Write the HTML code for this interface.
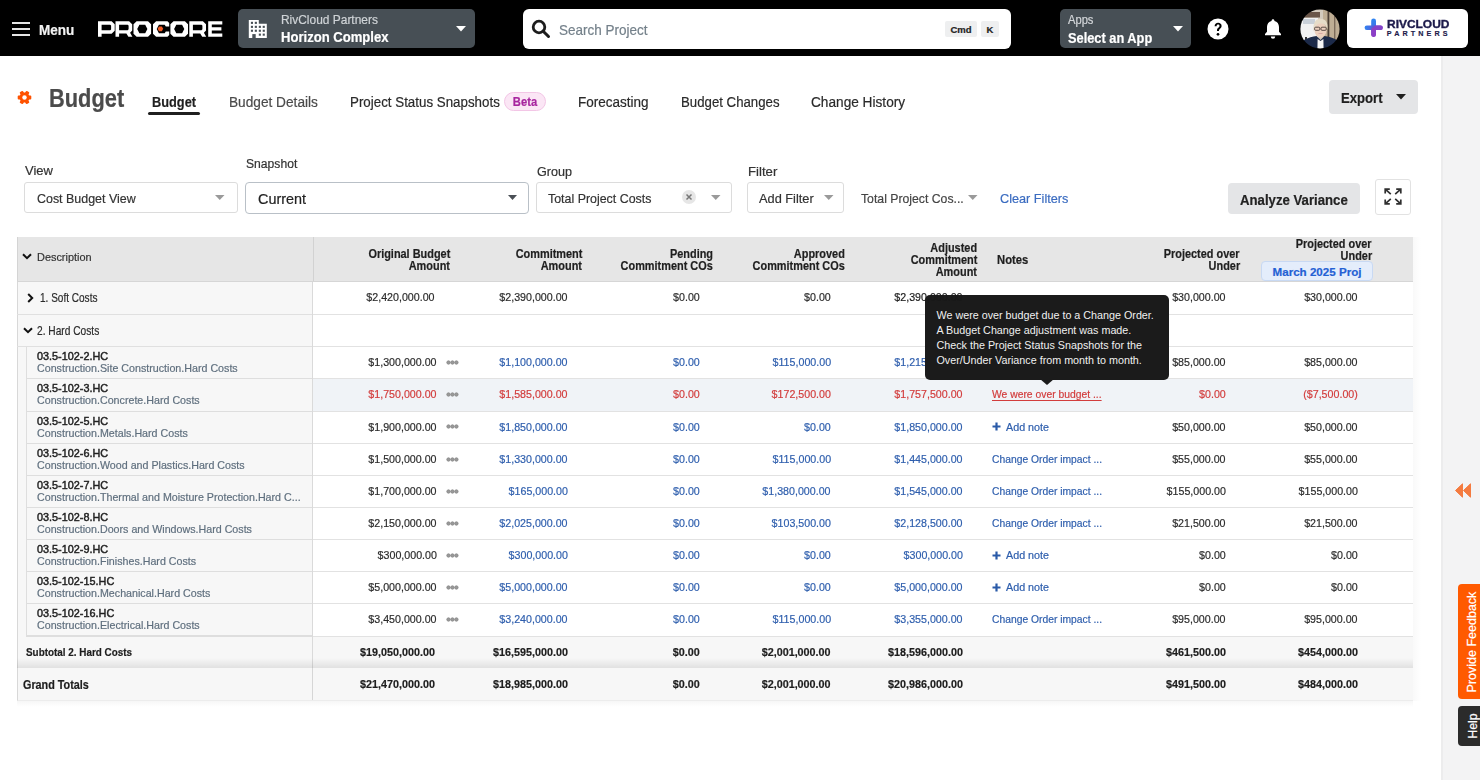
<!DOCTYPE html>
<html><head><meta charset="utf-8"><title>Budget</title>
<style>
html,body{margin:0;padding:0;}
body{width:1480px;height:780px;overflow:hidden;position:relative;background:#fff;font-family:"Liberation Sans",sans-serif;}
.t{position:absolute;line-height:1;white-space:nowrap;-webkit-text-stroke:0.2px currentColor;}
.r{position:absolute;box-sizing:border-box;}
svg{position:absolute;overflow:visible;}
</style></head><body>

<div class="r" style="left:0px;top:0px;width:1480px;height:56px;background:#000;"></div>
<div class="r" style="left:12px;top:22px;width:18px;height:2px;background:#e6e6e6;"></div>
<div class="r" style="left:12px;top:28px;width:18px;height:2px;background:#e6e6e6;"></div>
<div class="r" style="left:12px;top:34px;width:18px;height:2px;background:#e6e6e6;"></div>
<div class="t " style="left:38.5px;top:23.10px;font-size:14.30px;color:#f2f2f2;font-weight:700;transform:scaleX(0.9456);transform-origin:left top;">Menu</div>
<svg style="left:98px;top:21.1px" width="125" height="16" viewBox="0 0 125 15.5"><path transform="translate(0 0)" d="M0 0H13.6L16.7 2.9V9.6L13.6 12.5H3.6V15.5H0Z M3.6 3.4V9.1H12.2L13.1 8.2V4.3L12.2 3.4Z" fill="#fff" fill-rule="evenodd"/><path transform="translate(17.5 0)" d="M0 0H13.6L16.7 2.9V9.3L14.6 11.6L16.9 15.5H12.9L10.9 12.3H3.6V15.5H0Z M3.6 3.4V8.9H12.2L13.1 8V4.3L12.2 3.4Z" fill="#fff" fill-rule="evenodd"/><path transform="translate(35.5 0)" d="M3.1 0H14.5L17.6 3.1V12.4L14.5 15.5H3.1L0 12.4V3.1Z M5.9 3.5L3.7 7.75L5.9 12H11.7L13.9 7.75L11.7 3.5Z" fill="#fff" fill-rule="evenodd"/><path transform="translate(55 0)" d="M3.1 0H14.5L16.2 1.7V5.3H12.8L11.7 3.5H5.9L3.7 7.75L5.9 12H11.7L12.8 10.2H16.2V13.8L14.5 15.5H3.1L0 12.4V3.1Z" fill="#fff" fill-rule="evenodd"/><path transform="translate(72.4 0)" d="M3.1 0H14.5L17.6 3.1V12.4L14.5 15.5H3.1L0 12.4V3.1Z M5.9 3.5L3.7 7.75L5.9 12H11.7L13.9 7.75L11.7 3.5Z" fill="#fff" fill-rule="evenodd"/><path transform="translate(91.3 0)" d="M0 0H13.6L16.7 2.9V9.3L14.6 11.6L16.9 15.5H12.9L10.9 12.3H3.6V15.5H0Z M3.6 3.4V8.9H12.2L13.1 8V4.3L12.2 3.4Z" fill="#fff" fill-rule="evenodd"/><path transform="translate(110.2 0)" d="M0 0H14.1V3.3H3.6V6.1H13.2V9.3H3.6V12.2H14.1V15.5H0Z" fill="#fff" fill-rule="evenodd"/><path d="M59.6 7.6L61 5.2H63.8L65.2 7.6L63.8 10H61Z" fill="#f05a22"/></svg>
<div class="r" style="left:238px;top:9px;width:237px;height:39px;background:#474f55;border-radius:5px;"></div>
<svg style="left:249px;top:20px" width="18" height="18" viewBox="0.2 0.1 18 18"><path fill="#fff" d="M0 0H10V3.8H18V18H0z"/><rect x="2.1" y="1.9" width="2.1" height="2.1" fill="#474f55"/><rect x="6.0" y="1.9" width="2.1" height="2.1" fill="#474f55"/><rect x="2.1" y="5.9" width="2.1" height="2.1" fill="#474f55"/><rect x="6.0" y="5.9" width="2.1" height="2.1" fill="#474f55"/><rect x="10.0" y="5.9" width="2.1" height="2.1" fill="#474f55"/><rect x="13.9" y="5.9" width="2.1" height="2.1" fill="#474f55"/><rect x="2.1" y="9.8" width="2.1" height="2.1" fill="#474f55"/><rect x="6.0" y="9.8" width="2.1" height="2.1" fill="#474f55"/><rect x="10.0" y="9.8" width="2.1" height="2.1" fill="#474f55"/><rect x="13.9" y="9.8" width="2.1" height="2.1" fill="#474f55"/><rect x="10.0" y="13.7" width="2.1" height="2.1" fill="#474f55"/><rect x="13.9" y="13.7" width="2.1" height="2.1" fill="#474f55"/><rect x="3.5" y="14.2" width="3.4" height="4" fill="#474f55"/></svg>
<div class="t " style="left:281.2px;top:14.47px;font-size:12.20px;color:#cfd3d6;transform:scaleX(0.9799);transform-origin:left top;">RivCloud Partners</div>
<div class="t " style="left:281.2px;top:30.83px;font-size:13.90px;color:#fff;font-weight:700;transform:scaleX(0.9415);transform-origin:left top;">Horizon Complex</div>
<svg style="left:456px;top:26px" width="10" height="6"><path d="M0 0h10L5 5.5z" fill="#fff"/></svg>
<div class="r" style="left:523px;top:9px;width:488px;height:39.7px;background:#fff;border-radius:6px;"></div>
<svg style="left:531px;top:19px" width="20" height="20" viewBox="0 0 20 20"><circle cx="8" cy="8" r="5.8" fill="none" stroke="#1d1d1d" stroke-width="2.8"/><path d="M12.2 12.2L17.5 17.5" stroke="#1d1d1d" stroke-width="3" stroke-linecap="round"/></svg>
<div class="t " style="left:558.6px;top:22.98px;font-size:14.20px;color:#74808a;transform:scaleX(0.9514);transform-origin:left top;">Search Project</div>
<div class="r" style="left:945px;top:21px;width:32px;height:16px;background:#eeeff0;border-radius:2px;"></div>
<div class="t " style="left:461.0px;width:1000px;text-align:center;top:25.06px;font-size:9.50px;color:#222;font-weight:700;">Cmd</div>
<div class="r" style="left:981px;top:21px;width:18px;height:16px;background:#eeeff0;border-radius:2px;"></div>
<div class="t " style="left:490.0px;width:1000px;text-align:center;top:25.06px;font-size:9.50px;color:#222;font-weight:700;">K</div>
<div class="r" style="left:1060px;top:9px;width:131px;height:39px;background:#474f55;border-radius:5px;"></div>
<div class="t " style="left:1068.0px;top:14.30px;font-size:12.40px;color:#d4d7da;transform:scaleX(0.9000);transform-origin:left top;">Apps</div>
<div class="t " style="left:1068.0px;top:30.58px;font-size:14.20px;color:#fff;font-weight:700;transform:scaleX(0.9029);transform-origin:left top;">Select an App</div>
<svg style="left:1173px;top:26px" width="10" height="6"><path d="M0 0h10L5 5.5z" fill="#fff"/></svg>
<svg style="left:1207px;top:18px" width="22" height="22" viewBox="0 0 22 22"><circle cx="11" cy="11" r="10.5" fill="#fff"/><path d="M7.6 8.3c0-2.1 1.5-3.5 3.5-3.5s3.5 1.3 3.5 3.1c0 2.4-2.6 2.6-2.6 4.6v.5h-2v-.7c0-2.6 2.5-2.7 2.5-4.3 0-.9-.6-1.4-1.4-1.4-.9 0-1.5.6-1.5 1.7z" fill="#000"/><circle cx="11" cy="16.3" r="1.35" fill="#000"/></svg>
<svg style="left:1263px;top:18px" width="20" height="22" viewBox="0 0 20 22"><path d="M10 1.2c.8 0 1.4.6 1.4 1.3v.6c2.9.6 4.6 3 4.6 6v4.6l2 2.4v1.1H2v-1.1l2-2.4V9.1c0-3 1.7-5.4 4.6-6v-.6c0-.7.6-1.3 1.4-1.3z" fill="#fff"/><path d="M7.8 18.5h4.4a2.2 2.2 0 0 1-4.4 0z" fill="#fff"/></svg>
<svg style="left:1300px;top:9px" width="40" height="40" viewBox="0 0 40 40"><defs><clipPath id="avc"><circle cx="20" cy="20" r="19.6"/></clipPath><filter id="avb" x="-10%" y="-10%" width="120%" height="120%"><feGaussianBlur stdDeviation="0.6"/></filter></defs><g clip-path="url(#avc)"><g filter="url(#avb)"><rect x="-2" y="-2" width="44" height="44" fill="#d3cabd"/><rect x="-2" y="9" width="20" height="33" fill="#f1f1f1"/><rect x="4" y="3" width="16" height="5.5" fill="#6a574a"/><rect x="3" y="10" width="12" height="5" fill="#c9d0d8"/><rect x="23" y="-2" width="19" height="44" fill="#bfae94"/><rect x="27.5" y="2" width="1.8" height="34" fill="#4e4036"/><rect x="34" y="5" width="1.4" height="32" fill="#7d6c5a"/><rect x="5" y="28" width="2" height="6" fill="#333"/><ellipse cx="20.5" cy="21" rx="6" ry="7.6" fill="#ecd0be"/><path d="M13.6 23C12.6 14 15.5 9.8 20.5 9.8S28.3 13.5 27.4 20.5C26.2 16.5 24.5 14.6 20.5 14.6S15 16.8 13.6 23z" fill="#e6dcc8"/><rect x="14.6" y="18.2" width="5.2" height="3.1" rx="1" fill="none" stroke="#4a3c38" stroke-width="0.9"/><rect x="21" y="18.2" width="5.2" height="3.1" rx="1" fill="none" stroke="#4a3c38" stroke-width="0.9"/><path d="M18.5 24.5h4" stroke="#d4a0a0" stroke-width="0.8"/><path d="M1 42L4 31C8 28.5 13 27.5 16.5 27L20.5 31L24.5 27C28 27.5 33 28.5 37 31L40 42z" fill="#1f2a48"/><path d="M17.6 30L20.5 32L23.4 30L23.6 42H17.4z" fill="#f6f6f6"/></g></g></svg>
<div class="r" style="left:1347px;top:9px;width:121px;height:39px;background:#fff;border-radius:6px;"></div>
<svg style="left:1364px;top:18px" width="20" height="20" viewBox="0 0 20 20"><defs><linearGradient id="gv" x1="0" y1="0" x2="0" y2="1"><stop offset="0" stop-color="#2f86f2"/><stop offset="0.45" stop-color="#3d74e8"/><stop offset="1" stop-color="#9a3cc4"/></linearGradient><linearGradient id="gh" x1="0" y1="0" x2="1" y2="0"><stop offset="0" stop-color="#2f86f2"/><stop offset="0.5" stop-color="#5a5ad8"/><stop offset="1" stop-color="#8a40c8"/></linearGradient></defs><rect x="7.2" y="0.4" width="4.8" height="18.6" rx="2.4" fill="url(#gv)"/><rect x="0.6" y="7.5" width="18.2" height="4.4" rx="2.2" fill="url(#gh)"/><rect x="9.6" y="7.5" width="9.2" height="4.4" rx="2.2" fill="#8443c9"/><rect x="7.2" y="9.6" width="4.8" height="9.4" rx="2.4" fill="#8c3fc6"/></svg>
<div class="t " style="left:1386.6px;top:18.87px;font-size:11.50px;color:#1d1b4b;font-weight:700;transform:scaleX(1.0390);transform-origin:left top;-webkit-text-stroke:0.35px #1d1b4b;">RIVCLOUD</div>
<div class="t " style="left:1386.8px;top:30.31px;font-size:7.20px;color:#1d1b4b;font-weight:700;letter-spacing:3.1px;-webkit-text-stroke:0.15px #1d1b4b;">PARTNERS</div>
<div class="r" style="left:1441px;top:56px;width:39px;height:724px;background:#f3f3f4;border-left:2px solid #ececed;"></div>
<div class="r" style="left:1413px;top:237px;width:8px;height:464px;background:linear-gradient(to right,#f5f5f5,#fff);opacity:.6;"></div>
<svg style="left:1455px;top:483px" width="16" height="15" viewBox="0 0 16 15"><path d="M0.5 7.5L7.5 0.8V14.2z M8.5 7.5L15.5 0.8V14.2z" fill="#f47b40" stroke="#f47b40" stroke-width="1" stroke-linejoin="round"/></svg>
<div class="r" style="left:1458px;top:584px;width:22px;height:115px;background:#ff5a00;border-radius:4px 0 0 4px;"></div>
<div class="t" style="left:1471.5px;top:641.8px;font-size:12.5px;color:#fff;transform:translate(-50%,-50%) rotate(-90deg);line-height:1;">Provide Feedback</div>
<div class="r" style="left:1458px;top:706px;width:22px;height:40px;background:#2b2b2b;border-radius:4px 0 0 4px;"></div>
<div class="t" style="left:1473px;top:726px;font-size:12.3px;color:#fff;transform:translate(-50%,-50%) rotate(-90deg);line-height:1;">Help</div>
<svg style="left:17px;top:89.5px" width="15" height="15" viewBox="-7.5 -7.5 15 15"><circle r="5" fill="#ff5200"/><rect x="2" y="-1.9" width="4.8" height="3.8" rx="0.9" fill="#ff5200" transform="rotate(0)"/><rect x="2" y="-1.9" width="4.8" height="3.8" rx="0.9" fill="#ff5200" transform="rotate(60)"/><rect x="2" y="-1.9" width="4.8" height="3.8" rx="0.9" fill="#ff5200" transform="rotate(120)"/><rect x="2" y="-1.9" width="4.8" height="3.8" rx="0.9" fill="#ff5200" transform="rotate(180)"/><rect x="2" y="-1.9" width="4.8" height="3.8" rx="0.9" fill="#ff5200" transform="rotate(240)"/><rect x="2" y="-1.9" width="4.8" height="3.8" rx="0.9" fill="#ff5200" transform="rotate(300)"/><circle r="2.2" fill="#fff"/></svg>
<div class="t " style="left:48.6px;top:86.02px;font-size:24.90px;color:#4b4b4b;font-weight:700;transform:scaleX(0.8770);transform-origin:left top;">Budget</div>
<div class="t " style="left:151.9px;top:94.48px;font-size:15.50px;color:#1f1f1f;font-weight:700;transform:scaleX(0.8243);transform-origin:left top;">Budget</div>
<div class="r" style="left:148px;top:112px;width:52px;height:3px;background:#1f1f1f;border-radius:2px;"></div>
<div class="t " style="left:228.5px;top:94.48px;font-size:15.50px;color:#4a4a4a;transform:scaleX(0.8819);transform-origin:left top;">Budget Details</div>
<div class="t " style="left:350.0px;top:94.48px;font-size:15.50px;color:#2a2a2a;transform:scaleX(0.8608);transform-origin:left top;">Project Status Snapshots</div>
<div class="r" style="left:504px;top:92px;width:42px;height:19px;background:#fbe6f5;border:1px solid #f3c6e6;border-radius:10px;"></div>
<div class="t " style="left:25.0px;width:1000px;text-align:center;top:96.07px;font-size:12.20px;color:#a8269f;font-weight:700;transform:scaleX(0.9200);transform-origin:center top;">Beta</div>
<div class="t " style="left:578.2px;top:94.48px;font-size:15.50px;color:#2a2a2a;transform:scaleX(0.8719);transform-origin:left top;">Forecasting</div>
<div class="t " style="left:680.9px;top:94.48px;font-size:15.50px;color:#2a2a2a;transform:scaleX(0.8530);transform-origin:left top;">Budget Changes</div>
<div class="t " style="left:811.3px;top:94.48px;font-size:15.50px;color:#2a2a2a;transform:scaleX(0.8809);transform-origin:left top;">Change History</div>
<div class="r" style="left:1329px;top:80px;width:89px;height:34px;background:#e4e5e7;border-radius:4px;"></div>
<div class="t " style="left:1341.0px;top:91.33px;font-size:14.50px;color:#1f1f1f;font-weight:700;transform:scaleX(0.9059);transform-origin:left top;">Export</div>
<svg style="left:1396px;top:94px" width="10" height="6"><path d="M0 0h10L5 5.5z" fill="#1f1f1f"/></svg>
<div class="t " style="left:24.6px;top:165.36px;font-size:12.45px;color:#333;transform:scaleX(1.0463);transform-origin:left top;">View</div>
<div class="r" style="left:24px;top:182px;width:214px;height:31px;border:1px solid #dcdcdc;border-radius:3px;background:#fff;"></div>
<div class="t " style="left:37.4px;top:192.27px;font-size:13.50px;color:#333;transform:scaleX(0.9210);transform-origin:left top;">Cost Budget View</div>
<svg style="left:215px;top:195px" width="10" height="6"><path d="M0 0h9.5L4.75 5z" fill="#9a9a9a"/></svg>
<div class="t " style="left:245.5px;top:158.26px;font-size:12.45px;color:#333;transform:scaleX(0.9752);transform-origin:left top;">Snapshot</div>
<div class="r" style="left:245px;top:182px;width:284px;height:32px;border:1px solid #b9c0c7;border-radius:4px;background:#fff;"></div>
<div class="t " style="left:258.3px;top:192.20px;font-size:14.30px;color:#222;transform:scaleX(1.0067);transform-origin:left top;">Current</div>
<svg style="left:508px;top:195px" width="10" height="6"><path d="M0 0h9L4.5 5z" fill="#4a4f55"/></svg>
<div class="t " style="left:536.6px;top:165.76px;font-size:12.45px;color:#333;transform:scaleX(1.0116);transform-origin:left top;">Group</div>
<div class="r" style="left:536px;top:182px;width:196px;height:31px;border:1px solid #dcdcdc;border-radius:3px;background:#fff;"></div>
<div class="t " style="left:548.4px;top:192.27px;font-size:13.50px;color:#333;transform:scaleX(0.9188);transform-origin:left top;">Total Project Costs</div>
<div class="r" style="left:682px;top:190px;width:14px;height:14px;border-radius:50%;background:#e6e6e6;"></div>
<svg style="left:686px;top:194px" width="6" height="6"><path d="M0.5 0.5L5.5 5.5M5.5 0.5L0.5 5.5" stroke="#777" stroke-width="1.5"/></svg>
<svg style="left:711px;top:195px" width="10" height="6"><path d="M0 0h9.5L4.75 5z" fill="#9a9a9a"/></svg>
<div class="t " style="left:747.5px;top:165.76px;font-size:12.45px;color:#333;transform:scaleX(1.0591);transform-origin:left top;">Filter</div>
<div class="r" style="left:747px;top:182px;width:97px;height:31px;border:1px solid #dcdcdc;border-radius:3px;background:#fff;"></div>
<div class="t " style="left:758.8px;top:192.27px;font-size:13.50px;color:#333;transform:scaleX(0.9469);transform-origin:left top;">Add Filter</div>
<svg style="left:824px;top:195px" width="10" height="6"><path d="M0 0h9.5L4.75 5z" fill="#9a9a9a"/></svg>
<div class="t " style="left:861.3px;top:192.47px;font-size:13.50px;color:#444;transform:scaleX(0.9065);transform-origin:left top;">Total Project Cos...</div>
<svg style="left:968px;top:195px" width="10" height="6"><path d="M0 0h9.5L4.75 5z" fill="#9a9a9a"/></svg>
<div class="t " style="left:999.6px;top:192.07px;font-size:13.50px;color:#3b6cc0;transform:scaleX(0.9401);transform-origin:left top;">Clear Filters</div>
<div class="r" style="left:1228px;top:183px;width:132px;height:31px;background:#e4e5e7;border-radius:4px;"></div>
<div class="t " style="left:1239.7px;top:192.61px;font-size:14.40px;color:#232323;font-weight:700;transform:scaleX(0.9162);transform-origin:left top;">Analyze Variance</div>
<div class="r" style="left:1375px;top:179px;width:36px;height:36px;border:1px solid #e2e2e2;border-radius:3px;background:#fff;"></div>
<svg style="left:1383.5px;top:187.5px" width="18" height="17" viewBox="0 0 18 17" fill="none" stroke="#2f2f2f" stroke-width="1.7" stroke-linejoin="miter"><path d="M1.2 1.2L6.8 6.2M5.8 1.2H1.2V5.4"/><path d="M16.8 1.2L11.2 6.2M12.2 1.2H16.8V5.4"/><path d="M1.2 15.8L6.8 10.8M5.8 15.8H1.2V11.6"/><path d="M16.8 15.8L11.2 10.8M12.2 15.8H16.8V11.6"/></svg>
<div class="r" style="left:17px;top:237px;width:1396px;height:44px;background:#e6e6e6;border-left:1px solid #d4d4d4;"></div>
<div class="r" style="left:313px;top:237px;width:1px;height:44px;background:#d2d2d2;"></div>
<div class="r" style="left:17px;top:281px;width:1396px;height:1px;background:#d6d6d6;"></div>
<svg style="left:22px;top:253px" width="10" height="7"><path d="M1 1.2L5 5.2L9 1.2" fill="none" stroke="#111" stroke-width="2"/></svg>
<div class="t " style="left:37.4px;top:251.95px;font-size:11.40px;color:#333;transform:scaleX(0.9576);transform-origin:left top;">Description</div>
<div class="t " style="right:1030.0px;top:247.99px;font-size:12.18px;color:#1f1f1f;font-weight:700;transform:scaleX(0.8970);transform-origin:right top;">Original Budget</div>
<div class="t " style="right:1030.0px;top:259.99px;font-size:12.18px;color:#1f1f1f;font-weight:700;transform:scaleX(0.8970);transform-origin:right top;">Amount</div>
<div class="t " style="right:898.0px;top:247.99px;font-size:12.18px;color:#1f1f1f;font-weight:700;transform:scaleX(0.8970);transform-origin:right top;">Commitment</div>
<div class="t " style="right:898.0px;top:259.99px;font-size:12.18px;color:#1f1f1f;font-weight:700;transform:scaleX(0.8970);transform-origin:right top;">Amount</div>
<div class="t " style="right:767.0px;top:247.99px;font-size:12.18px;color:#1f1f1f;font-weight:700;transform:scaleX(0.8970);transform-origin:right top;">Pending</div>
<div class="t " style="right:767.0px;top:259.99px;font-size:12.18px;color:#1f1f1f;font-weight:700;transform:scaleX(0.8970);transform-origin:right top;">Commitment COs</div>
<div class="t " style="right:635.0px;top:247.99px;font-size:12.18px;color:#1f1f1f;font-weight:700;transform:scaleX(0.8970);transform-origin:right top;">Approved</div>
<div class="t " style="right:635.0px;top:259.99px;font-size:12.18px;color:#1f1f1f;font-weight:700;transform:scaleX(0.8970);transform-origin:right top;">Commitment COs</div>
<div class="t " style="right:503.0px;top:241.79px;font-size:12.18px;color:#1f1f1f;font-weight:700;transform:scaleX(0.8970);transform-origin:right top;">Adjusted</div>
<div class="t " style="right:503.0px;top:253.79px;font-size:12.18px;color:#1f1f1f;font-weight:700;transform:scaleX(0.8970);transform-origin:right top;">Commitment</div>
<div class="t " style="right:503.0px;top:265.79px;font-size:12.18px;color:#1f1f1f;font-weight:700;transform:scaleX(0.8970);transform-origin:right top;">Amount</div>
<div class="t " style="left:997.3px;top:254.49px;font-size:12.18px;color:#1f1f1f;font-weight:700;transform:scaleX(0.9250);transform-origin:left top;">Notes</div>
<div class="t " style="right:240.0px;top:247.89px;font-size:12.18px;color:#1f1f1f;font-weight:700;transform:scaleX(0.8970);transform-origin:right top;">Projected over</div>
<div class="t " style="right:240.0px;top:259.89px;font-size:12.18px;color:#1f1f1f;font-weight:700;transform:scaleX(0.8970);transform-origin:right top;">Under</div>
<div class="t " style="right:108.0px;top:237.99px;font-size:12.18px;color:#1f1f1f;font-weight:700;transform:scaleX(0.8970);transform-origin:right top;">Projected over</div>
<div class="t " style="right:108.0px;top:249.99px;font-size:12.18px;color:#1f1f1f;font-weight:700;transform:scaleX(0.8970);transform-origin:right top;">Under</div>
<div class="r" style="left:1261px;top:261px;width:112px;height:20px;background:#e4edfb;border:1px solid #c8d9f3;border-radius:4px;"></div>
<div class="t " style="left:817.0px;width:1000px;text-align:center;top:266.28px;font-size:11.60px;color:#2461d4;font-weight:700;">March 2025 Proj</div>
<div class="r" style="left:17px;top:282px;width:295px;height:419px;background:#f7f7f7;border-left:1px solid #d8d8d8;"></div>
<div class="r" style="left:312px;top:282px;width:1px;height:419px;background:#dadada;"></div>
<div class="r" style="left:313px;top:282px;width:1100px;height:386px;background:#fff;"></div>
<div class="r" style="left:26px;top:346px;width:286px;height:290px;border:1px solid #dedede;border-right:none;"></div>
<div class="r" style="left:17px;top:314px;width:295px;height:1px;background:#e0e0e0;"></div>
<div class="r" style="left:313px;top:314px;width:1100px;height:1px;background:#e2e2e2;"></div>
<svg style="left:27px;top:292.5px" width="7" height="10"><path d="M1.2 1L5.2 5L1.2 9" fill="none" stroke="#111" stroke-width="2"/></svg>
<div class="t " style="left:39.7px;top:292.07px;font-size:12.20px;color:#2b2b2b;transform:scaleX(0.8233);transform-origin:left top;">1. Soft Costs</div>
<div class="t " style="right:1045.0px;top:292.37px;font-size:11.50px;color:#2b2b2b;transform:scaleX(0.9280);transform-origin:right top;">$2,420,000.00</div>
<div class="t " style="right:912.0px;top:292.37px;font-size:11.50px;color:#2b2b2b;transform:scaleX(0.9280);transform-origin:right top;">$2,390,000.00</div>
<div class="t " style="right:780.5px;top:292.37px;font-size:11.50px;color:#2b2b2b;transform:scaleX(0.9280);transform-origin:right top;">$0.00</div>
<div class="t " style="right:649.0px;top:292.37px;font-size:11.50px;color:#2b2b2b;transform:scaleX(0.9280);transform-origin:right top;">$0.00</div>
<div class="t " style="right:254.0px;top:292.37px;font-size:11.50px;color:#2b2b2b;transform:scaleX(0.9280);transform-origin:right top;">$30,000.00</div>
<div class="t " style="right:122.5px;top:292.37px;font-size:11.50px;color:#2b2b2b;transform:scaleX(0.9280);transform-origin:right top;">$30,000.00</div>
<div class="r" style="left:17px;top:346px;width:295px;height:1px;background:#e0e0e0;"></div>
<div class="r" style="left:313px;top:346px;width:1100px;height:1px;background:#e2e2e2;"></div>
<svg style="left:23px;top:327.0px" width="10" height="7"><path d="M1 1.2L5 5.2L9 1.2" fill="none" stroke="#111" stroke-width="2"/></svg>
<div class="t " style="left:37.4px;top:324.57px;font-size:12.20px;color:#2b2b2b;transform:scaleX(0.8354);transform-origin:left top;">2. Hard Costs</div>
<div class="r" style="left:26px;top:378px;width:286px;height:1px;background:#dedede;"></div>
<div class="r" style="left:313px;top:378px;width:1100px;height:1px;background:#e2e2e2;"></div>
<div class="t " style="left:36.9px;top:350.77px;font-size:11.20px;color:#222;transform:scaleX(0.9700);transform-origin:left top;-webkit-text-stroke:0.45px #222;">03.5-102-2.HC</div>
<div class="t " style="left:36.9px;top:362.97px;font-size:11.20px;color:#5f6f7e;transform:scaleX(0.9550);transform-origin:left top;">Construction.Site Construction.Hard Costs</div>
<div class="t " style="right:1043.0px;top:356.87px;font-size:11.50px;color:#2b2b2b;transform:scaleX(0.9280);transform-origin:right top;">$1,300,000.00</div>
<svg style="left:446px;top:359.50px" width="13" height="5" viewBox="0 0 13 5" fill="#9a9a9a" stroke="#858585" stroke-width="0.8"><circle cx="2.5" cy="2.5" r="1.7"/><circle cx="6.45" cy="2.5" r="1.7"/><circle cx="10.4" cy="2.5" r="1.7"/></svg>
<div class="t " style="right:912.0px;top:356.87px;font-size:11.50px;color:#2e5ead;transform:scaleX(0.9280);transform-origin:right top;">$1,100,000.00</div>
<div class="t " style="right:780.5px;top:356.87px;font-size:11.50px;color:#2e5ead;transform:scaleX(0.9280);transform-origin:right top;">$0.00</div>
<div class="t " style="right:649.0px;top:356.87px;font-size:11.50px;color:#2e5ead;transform:scaleX(0.9280);transform-origin:right top;">$115,000.00</div>
<div class="t " style="right:517.0px;top:356.87px;font-size:11.50px;color:#2e5ead;transform:scaleX(0.9280);transform-origin:right top;">$1,215,000.00</div>
<div class="t " style="left:991.6px;top:356.87px;font-size:11.50px;color:#2e5ead;transform:scaleX(0.8964);transform-origin:left top;">Change Order impact ...</div>
<div class="t " style="right:254.0px;top:356.87px;font-size:11.50px;color:#2b2b2b;transform:scaleX(0.9280);transform-origin:right top;">$85,000.00</div>
<div class="t " style="right:122.5px;top:356.87px;font-size:11.50px;color:#2b2b2b;transform:scaleX(0.9280);transform-origin:right top;">$85,000.00</div>
<div class="r" style="left:313px;top:379px;width:1100px;height:31.5px;background:#f0f3f7;"></div>
<div class="r" style="left:26px;top:410.5px;width:286px;height:1px;background:#dedede;"></div>
<div class="r" style="left:313px;top:410.5px;width:1100px;height:1px;background:#e2e2e2;"></div>
<div class="t " style="left:36.9px;top:383.02px;font-size:11.20px;color:#222;transform:scaleX(0.9700);transform-origin:left top;-webkit-text-stroke:0.45px #222;">03.5-102-3.HC</div>
<div class="t " style="left:36.9px;top:395.22px;font-size:11.20px;color:#5f6f7e;transform:scaleX(0.9550);transform-origin:left top;">Construction.Concrete.Hard Costs</div>
<div class="t " style="right:1043.0px;top:389.12px;font-size:11.50px;color:#d23c3c;transform:scaleX(0.9280);transform-origin:right top;">$1,750,000.00</div>
<svg style="left:446px;top:391.75px" width="13" height="5" viewBox="0 0 13 5" fill="#9a9a9a" stroke="#858585" stroke-width="0.8"><circle cx="2.5" cy="2.5" r="1.7"/><circle cx="6.45" cy="2.5" r="1.7"/><circle cx="10.4" cy="2.5" r="1.7"/></svg>
<div class="t " style="right:912.0px;top:389.12px;font-size:11.50px;color:#d23c3c;transform:scaleX(0.9280);transform-origin:right top;">$1,585,000.00</div>
<div class="t " style="right:780.5px;top:389.12px;font-size:11.50px;color:#d23c3c;transform:scaleX(0.9280);transform-origin:right top;">$0.00</div>
<div class="t " style="right:649.0px;top:389.12px;font-size:11.50px;color:#d23c3c;transform:scaleX(0.9280);transform-origin:right top;">$172,500.00</div>
<div class="t " style="right:517.0px;top:389.12px;font-size:11.50px;color:#d23c3c;transform:scaleX(0.9280);transform-origin:right top;">$1,757,500.00</div>
<div class="t " style="left:991.6px;top:389.12px;font-size:11.50px;color:#d23c3c;transform:scaleX(0.8993);transform-origin:left top;text-decoration:underline;text-underline-offset:1.5px;">We were over budget ...</div>
<div class="t " style="right:254.0px;top:389.12px;font-size:11.50px;color:#d23c3c;transform:scaleX(0.9280);transform-origin:right top;">$0.00</div>
<div class="t " style="right:122.5px;top:389.12px;font-size:11.50px;color:#d23c3c;transform:scaleX(0.9280);transform-origin:right top;">($7,500.00)</div>
<div class="r" style="left:26px;top:443px;width:286px;height:1px;background:#dedede;"></div>
<div class="r" style="left:313px;top:443px;width:1100px;height:1px;background:#e2e2e2;"></div>
<div class="t " style="left:36.9px;top:415.52px;font-size:11.20px;color:#222;transform:scaleX(0.9700);transform-origin:left top;-webkit-text-stroke:0.45px #222;">03.5-102-5.HC</div>
<div class="t " style="left:36.9px;top:427.72px;font-size:11.20px;color:#5f6f7e;transform:scaleX(0.9550);transform-origin:left top;">Construction.Metals.Hard Costs</div>
<div class="t " style="right:1043.0px;top:421.62px;font-size:11.50px;color:#2b2b2b;transform:scaleX(0.9280);transform-origin:right top;">$1,900,000.00</div>
<svg style="left:446px;top:424.25px" width="13" height="5" viewBox="0 0 13 5" fill="#9a9a9a" stroke="#858585" stroke-width="0.8"><circle cx="2.5" cy="2.5" r="1.7"/><circle cx="6.45" cy="2.5" r="1.7"/><circle cx="10.4" cy="2.5" r="1.7"/></svg>
<div class="t " style="right:912.0px;top:421.62px;font-size:11.50px;color:#2e5ead;transform:scaleX(0.9280);transform-origin:right top;">$1,850,000.00</div>
<div class="t " style="right:780.5px;top:421.62px;font-size:11.50px;color:#2e5ead;transform:scaleX(0.9280);transform-origin:right top;">$0.00</div>
<div class="t " style="right:649.0px;top:421.62px;font-size:11.50px;color:#2e5ead;transform:scaleX(0.9280);transform-origin:right top;">$0.00</div>
<div class="t " style="right:517.0px;top:421.62px;font-size:11.50px;color:#2e5ead;transform:scaleX(0.9280);transform-origin:right top;">$1,850,000.00</div>
<svg style="left:992px;top:422.2px" width="9" height="9"><path d="M4.5 0.5v8M0.5 4.5h8" stroke="#2a5aa8" stroke-width="2.2"/></svg>
<div class="t " style="left:1006.0px;top:421.62px;font-size:11.50px;color:#2e5ead;transform:scaleX(0.9341);transform-origin:left top;">Add note</div>
<div class="t " style="right:254.0px;top:421.62px;font-size:11.50px;color:#2b2b2b;transform:scaleX(0.9280);transform-origin:right top;">$50,000.00</div>
<div class="t " style="right:122.5px;top:421.62px;font-size:11.50px;color:#2b2b2b;transform:scaleX(0.9280);transform-origin:right top;">$50,000.00</div>
<div class="r" style="left:26px;top:475px;width:286px;height:1px;background:#dedede;"></div>
<div class="r" style="left:313px;top:475px;width:1100px;height:1px;background:#e2e2e2;"></div>
<div class="t " style="left:36.9px;top:447.77px;font-size:11.20px;color:#222;transform:scaleX(0.9700);transform-origin:left top;-webkit-text-stroke:0.45px #222;">03.5-102-6.HC</div>
<div class="t " style="left:36.9px;top:459.97px;font-size:11.20px;color:#5f6f7e;transform:scaleX(0.9550);transform-origin:left top;">Construction.Wood and Plastics.Hard Costs</div>
<div class="t " style="right:1043.0px;top:453.87px;font-size:11.50px;color:#2b2b2b;transform:scaleX(0.9280);transform-origin:right top;">$1,500,000.00</div>
<svg style="left:446px;top:456.50px" width="13" height="5" viewBox="0 0 13 5" fill="#9a9a9a" stroke="#858585" stroke-width="0.8"><circle cx="2.5" cy="2.5" r="1.7"/><circle cx="6.45" cy="2.5" r="1.7"/><circle cx="10.4" cy="2.5" r="1.7"/></svg>
<div class="t " style="right:912.0px;top:453.87px;font-size:11.50px;color:#2e5ead;transform:scaleX(0.9280);transform-origin:right top;">$1,330,000.00</div>
<div class="t " style="right:780.5px;top:453.87px;font-size:11.50px;color:#2e5ead;transform:scaleX(0.9280);transform-origin:right top;">$0.00</div>
<div class="t " style="right:649.0px;top:453.87px;font-size:11.50px;color:#2e5ead;transform:scaleX(0.9280);transform-origin:right top;">$115,000.00</div>
<div class="t " style="right:517.0px;top:453.87px;font-size:11.50px;color:#2e5ead;transform:scaleX(0.9280);transform-origin:right top;">$1,445,000.00</div>
<div class="t " style="left:991.6px;top:453.87px;font-size:11.50px;color:#2e5ead;transform:scaleX(0.8964);transform-origin:left top;">Change Order impact ...</div>
<div class="t " style="right:254.0px;top:453.87px;font-size:11.50px;color:#2b2b2b;transform:scaleX(0.9280);transform-origin:right top;">$55,000.00</div>
<div class="t " style="right:122.5px;top:453.87px;font-size:11.50px;color:#2b2b2b;transform:scaleX(0.9280);transform-origin:right top;">$55,000.00</div>
<div class="r" style="left:26px;top:507px;width:286px;height:1px;background:#dedede;"></div>
<div class="r" style="left:313px;top:507px;width:1100px;height:1px;background:#e2e2e2;"></div>
<div class="t " style="left:36.9px;top:479.77px;font-size:11.20px;color:#222;transform:scaleX(0.9700);transform-origin:left top;-webkit-text-stroke:0.45px #222;">03.5-102-7.HC</div>
<div class="t " style="left:36.9px;top:491.97px;font-size:11.20px;color:#5f6f7e;transform:scaleX(0.9550);transform-origin:left top;">Construction.Thermal and Moisture Protection.Hard C...</div>
<div class="t " style="right:1043.0px;top:485.87px;font-size:11.50px;color:#2b2b2b;transform:scaleX(0.9280);transform-origin:right top;">$1,700,000.00</div>
<svg style="left:446px;top:488.50px" width="13" height="5" viewBox="0 0 13 5" fill="#9a9a9a" stroke="#858585" stroke-width="0.8"><circle cx="2.5" cy="2.5" r="1.7"/><circle cx="6.45" cy="2.5" r="1.7"/><circle cx="10.4" cy="2.5" r="1.7"/></svg>
<div class="t " style="right:912.0px;top:485.87px;font-size:11.50px;color:#2e5ead;transform:scaleX(0.9280);transform-origin:right top;">$165,000.00</div>
<div class="t " style="right:780.5px;top:485.87px;font-size:11.50px;color:#2e5ead;transform:scaleX(0.9280);transform-origin:right top;">$0.00</div>
<div class="t " style="right:649.0px;top:485.87px;font-size:11.50px;color:#2e5ead;transform:scaleX(0.9280);transform-origin:right top;">$1,380,000.00</div>
<div class="t " style="right:517.0px;top:485.87px;font-size:11.50px;color:#2e5ead;transform:scaleX(0.9280);transform-origin:right top;">$1,545,000.00</div>
<div class="t " style="left:991.6px;top:485.87px;font-size:11.50px;color:#2e5ead;transform:scaleX(0.8964);transform-origin:left top;">Change Order impact ...</div>
<div class="t " style="right:254.0px;top:485.87px;font-size:11.50px;color:#2b2b2b;transform:scaleX(0.9280);transform-origin:right top;">$155,000.00</div>
<div class="t " style="right:122.5px;top:485.87px;font-size:11.50px;color:#2b2b2b;transform:scaleX(0.9280);transform-origin:right top;">$155,000.00</div>
<div class="r" style="left:26px;top:539px;width:286px;height:1px;background:#dedede;"></div>
<div class="r" style="left:313px;top:539px;width:1100px;height:1px;background:#e2e2e2;"></div>
<div class="t " style="left:36.9px;top:511.77px;font-size:11.20px;color:#222;transform:scaleX(0.9700);transform-origin:left top;-webkit-text-stroke:0.45px #222;">03.5-102-8.HC</div>
<div class="t " style="left:36.9px;top:523.97px;font-size:11.20px;color:#5f6f7e;transform:scaleX(0.9550);transform-origin:left top;">Construction.Doors and Windows.Hard Costs</div>
<div class="t " style="right:1043.0px;top:517.87px;font-size:11.50px;color:#2b2b2b;transform:scaleX(0.9280);transform-origin:right top;">$2,150,000.00</div>
<svg style="left:446px;top:520.50px" width="13" height="5" viewBox="0 0 13 5" fill="#9a9a9a" stroke="#858585" stroke-width="0.8"><circle cx="2.5" cy="2.5" r="1.7"/><circle cx="6.45" cy="2.5" r="1.7"/><circle cx="10.4" cy="2.5" r="1.7"/></svg>
<div class="t " style="right:912.0px;top:517.87px;font-size:11.50px;color:#2e5ead;transform:scaleX(0.9280);transform-origin:right top;">$2,025,000.00</div>
<div class="t " style="right:780.5px;top:517.87px;font-size:11.50px;color:#2e5ead;transform:scaleX(0.9280);transform-origin:right top;">$0.00</div>
<div class="t " style="right:649.0px;top:517.87px;font-size:11.50px;color:#2e5ead;transform:scaleX(0.9280);transform-origin:right top;">$103,500.00</div>
<div class="t " style="right:517.0px;top:517.87px;font-size:11.50px;color:#2e5ead;transform:scaleX(0.9280);transform-origin:right top;">$2,128,500.00</div>
<div class="t " style="left:991.6px;top:517.87px;font-size:11.50px;color:#2e5ead;transform:scaleX(0.8964);transform-origin:left top;">Change Order impact ...</div>
<div class="t " style="right:254.0px;top:517.87px;font-size:11.50px;color:#2b2b2b;transform:scaleX(0.9280);transform-origin:right top;">$21,500.00</div>
<div class="t " style="right:122.5px;top:517.87px;font-size:11.50px;color:#2b2b2b;transform:scaleX(0.9280);transform-origin:right top;">$21,500.00</div>
<div class="r" style="left:26px;top:571px;width:286px;height:1px;background:#dedede;"></div>
<div class="r" style="left:313px;top:571px;width:1100px;height:1px;background:#e2e2e2;"></div>
<div class="t " style="left:36.9px;top:543.77px;font-size:11.20px;color:#222;transform:scaleX(0.9700);transform-origin:left top;-webkit-text-stroke:0.45px #222;">03.5-102-9.HC</div>
<div class="t " style="left:36.9px;top:555.97px;font-size:11.20px;color:#5f6f7e;transform:scaleX(0.9550);transform-origin:left top;">Construction.Finishes.Hard Costs</div>
<div class="t " style="right:1043.0px;top:549.87px;font-size:11.50px;color:#2b2b2b;transform:scaleX(0.9280);transform-origin:right top;">$300,000.00</div>
<svg style="left:446px;top:552.50px" width="13" height="5" viewBox="0 0 13 5" fill="#9a9a9a" stroke="#858585" stroke-width="0.8"><circle cx="2.5" cy="2.5" r="1.7"/><circle cx="6.45" cy="2.5" r="1.7"/><circle cx="10.4" cy="2.5" r="1.7"/></svg>
<div class="t " style="right:912.0px;top:549.87px;font-size:11.50px;color:#2e5ead;transform:scaleX(0.9280);transform-origin:right top;">$300,000.00</div>
<div class="t " style="right:780.5px;top:549.87px;font-size:11.50px;color:#2e5ead;transform:scaleX(0.9280);transform-origin:right top;">$0.00</div>
<div class="t " style="right:649.0px;top:549.87px;font-size:11.50px;color:#2e5ead;transform:scaleX(0.9280);transform-origin:right top;">$0.00</div>
<div class="t " style="right:517.0px;top:549.87px;font-size:11.50px;color:#2e5ead;transform:scaleX(0.9280);transform-origin:right top;">$300,000.00</div>
<svg style="left:992px;top:550.5px" width="9" height="9"><path d="M4.5 0.5v8M0.5 4.5h8" stroke="#2a5aa8" stroke-width="2.2"/></svg>
<div class="t " style="left:1006.0px;top:549.87px;font-size:11.50px;color:#2e5ead;transform:scaleX(0.9341);transform-origin:left top;">Add note</div>
<div class="t " style="right:254.0px;top:549.87px;font-size:11.50px;color:#2b2b2b;transform:scaleX(0.9280);transform-origin:right top;">$0.00</div>
<div class="t " style="right:122.5px;top:549.87px;font-size:11.50px;color:#2b2b2b;transform:scaleX(0.9280);transform-origin:right top;">$0.00</div>
<div class="r" style="left:26px;top:603px;width:286px;height:1px;background:#dedede;"></div>
<div class="r" style="left:313px;top:603px;width:1100px;height:1px;background:#e2e2e2;"></div>
<div class="t " style="left:36.9px;top:575.77px;font-size:11.20px;color:#222;transform:scaleX(0.9700);transform-origin:left top;-webkit-text-stroke:0.45px #222;">03.5-102-15.HC</div>
<div class="t " style="left:36.9px;top:587.97px;font-size:11.20px;color:#5f6f7e;transform:scaleX(0.9550);transform-origin:left top;">Construction.Mechanical.Hard Costs</div>
<div class="t " style="right:1043.0px;top:581.87px;font-size:11.50px;color:#2b2b2b;transform:scaleX(0.9280);transform-origin:right top;">$5,000,000.00</div>
<svg style="left:446px;top:584.50px" width="13" height="5" viewBox="0 0 13 5" fill="#9a9a9a" stroke="#858585" stroke-width="0.8"><circle cx="2.5" cy="2.5" r="1.7"/><circle cx="6.45" cy="2.5" r="1.7"/><circle cx="10.4" cy="2.5" r="1.7"/></svg>
<div class="t " style="right:912.0px;top:581.87px;font-size:11.50px;color:#2e5ead;transform:scaleX(0.9280);transform-origin:right top;">$5,000,000.00</div>
<div class="t " style="right:780.5px;top:581.87px;font-size:11.50px;color:#2e5ead;transform:scaleX(0.9280);transform-origin:right top;">$0.00</div>
<div class="t " style="right:649.0px;top:581.87px;font-size:11.50px;color:#2e5ead;transform:scaleX(0.9280);transform-origin:right top;">$0.00</div>
<div class="t " style="right:517.0px;top:581.87px;font-size:11.50px;color:#2e5ead;transform:scaleX(0.9280);transform-origin:right top;">$5,000,000.00</div>
<svg style="left:992px;top:582.5px" width="9" height="9"><path d="M4.5 0.5v8M0.5 4.5h8" stroke="#2a5aa8" stroke-width="2.2"/></svg>
<div class="t " style="left:1006.0px;top:581.87px;font-size:11.50px;color:#2e5ead;transform:scaleX(0.9341);transform-origin:left top;">Add note</div>
<div class="t " style="right:254.0px;top:581.87px;font-size:11.50px;color:#2b2b2b;transform:scaleX(0.9280);transform-origin:right top;">$0.00</div>
<div class="t " style="right:122.5px;top:581.87px;font-size:11.50px;color:#2b2b2b;transform:scaleX(0.9280);transform-origin:right top;">$0.00</div>
<div class="r" style="left:26px;top:636px;width:286px;height:1px;background:#dedede;"></div>
<div class="r" style="left:313px;top:636px;width:1100px;height:1px;background:#e2e2e2;"></div>
<div class="t " style="left:36.9px;top:608.27px;font-size:11.20px;color:#222;transform:scaleX(0.9700);transform-origin:left top;-webkit-text-stroke:0.45px #222;">03.5-102-16.HC</div>
<div class="t " style="left:36.9px;top:620.47px;font-size:11.20px;color:#5f6f7e;transform:scaleX(0.9550);transform-origin:left top;">Construction.Electrical.Hard Costs</div>
<div class="t " style="right:1043.0px;top:614.37px;font-size:11.50px;color:#2b2b2b;transform:scaleX(0.9280);transform-origin:right top;">$3,450,000.00</div>
<svg style="left:446px;top:617.00px" width="13" height="5" viewBox="0 0 13 5" fill="#9a9a9a" stroke="#858585" stroke-width="0.8"><circle cx="2.5" cy="2.5" r="1.7"/><circle cx="6.45" cy="2.5" r="1.7"/><circle cx="10.4" cy="2.5" r="1.7"/></svg>
<div class="t " style="right:912.0px;top:614.37px;font-size:11.50px;color:#2e5ead;transform:scaleX(0.9280);transform-origin:right top;">$3,240,000.00</div>
<div class="t " style="right:780.5px;top:614.37px;font-size:11.50px;color:#2e5ead;transform:scaleX(0.9280);transform-origin:right top;">$0.00</div>
<div class="t " style="right:649.0px;top:614.37px;font-size:11.50px;color:#2e5ead;transform:scaleX(0.9280);transform-origin:right top;">$115,000.00</div>
<div class="t " style="right:517.0px;top:614.37px;font-size:11.50px;color:#2e5ead;transform:scaleX(0.9280);transform-origin:right top;">$3,355,000.00</div>
<div class="t " style="left:991.6px;top:614.37px;font-size:11.50px;color:#2e5ead;transform:scaleX(0.8964);transform-origin:left top;">Change Order impact ...</div>
<div class="t " style="right:254.0px;top:614.37px;font-size:11.50px;color:#2b2b2b;transform:scaleX(0.9280);transform-origin:right top;">$95,000.00</div>
<div class="t " style="right:122.5px;top:614.37px;font-size:11.50px;color:#2b2b2b;transform:scaleX(0.9280);transform-origin:right top;">$95,000.00</div>
<div class="r" style="left:17px;top:637px;width:295px;height:31px;background:#f7f7f7;border-left:1px solid #d8d8d8;"></div>
<div class="r" style="left:313px;top:637px;width:1100px;height:31px;background:#f7f7f7;"></div>
<div class="r" style="left:17px;top:658px;width:1396px;height:10px;background:linear-gradient(to bottom,rgba(0,0,0,0),rgba(0,0,0,.09));"></div>
<div class="r" style="left:17px;top:668px;width:1396px;height:1px;background:#cdcdcd;"></div>
<div class="t " style="left:26.4px;top:646.81px;font-size:11.80px;color:#1d1d1d;font-weight:700;transform:scaleX(0.8377);transform-origin:left top;">Subtotal 2. Hard Costs</div>
<div class="t " style="right:1045.0px;top:646.87px;font-size:11.50px;color:#1d1d1d;font-weight:700;transform:scaleX(0.9360);transform-origin:right top;">$19,050,000.00</div>
<div class="t " style="right:912.0px;top:646.87px;font-size:11.50px;color:#1d1d1d;font-weight:700;transform:scaleX(0.9360);transform-origin:right top;">$16,595,000.00</div>
<div class="t " style="right:780.5px;top:646.87px;font-size:11.50px;color:#1d1d1d;font-weight:700;transform:scaleX(0.9360);transform-origin:right top;">$0.00</div>
<div class="t " style="right:649.0px;top:646.87px;font-size:11.50px;color:#1d1d1d;font-weight:700;transform:scaleX(0.9360);transform-origin:right top;">$2,001,000.00</div>
<div class="t " style="right:517.0px;top:646.87px;font-size:11.50px;color:#1d1d1d;font-weight:700;transform:scaleX(0.9360);transform-origin:right top;">$18,596,000.00</div>
<div class="t " style="right:254.0px;top:646.87px;font-size:11.50px;color:#1d1d1d;font-weight:700;transform:scaleX(0.9360);transform-origin:right top;">$461,500.00</div>
<div class="t " style="right:122.5px;top:646.87px;font-size:11.50px;color:#1d1d1d;font-weight:700;transform:scaleX(0.9360);transform-origin:right top;">$454,000.00</div>
<div class="r" style="left:17px;top:668px;width:1396px;height:33px;background:#f7f7f7;border-bottom:1px solid #ececec;border-left:1px solid #d8d8d8;"></div>
<div class="r" style="left:312px;top:668px;width:1px;height:32px;background:#d6d6d6;"></div>
<div class="t " style="left:22.6px;top:678.77px;font-size:12.20px;color:#1d1d1d;font-weight:700;transform:scaleX(0.8866);transform-origin:left top;">Grand Totals</div>
<div class="t " style="right:1045.0px;top:678.87px;font-size:11.50px;color:#1d1d1d;font-weight:700;transform:scaleX(0.9360);transform-origin:right top;">$21,470,000.00</div>
<div class="t " style="right:912.0px;top:678.87px;font-size:11.50px;color:#1d1d1d;font-weight:700;transform:scaleX(0.9360);transform-origin:right top;">$18,985,000.00</div>
<div class="t " style="right:780.5px;top:678.87px;font-size:11.50px;color:#1d1d1d;font-weight:700;transform:scaleX(0.9360);transform-origin:right top;">$0.00</div>
<div class="t " style="right:649.0px;top:678.87px;font-size:11.50px;color:#1d1d1d;font-weight:700;transform:scaleX(0.9360);transform-origin:right top;">$2,001,000.00</div>
<div class="t " style="right:517.0px;top:678.87px;font-size:11.50px;color:#1d1d1d;font-weight:700;transform:scaleX(0.9360);transform-origin:right top;">$20,986,000.00</div>
<div class="t " style="right:254.0px;top:678.87px;font-size:11.50px;color:#1d1d1d;font-weight:700;transform:scaleX(0.9360);transform-origin:right top;">$491,500.00</div>
<div class="t " style="right:122.5px;top:678.87px;font-size:11.50px;color:#1d1d1d;font-weight:700;transform:scaleX(0.9360);transform-origin:right top;">$484,000.00</div>
<div class="r" style="left:17px;top:701px;width:1396px;height:6px;background:linear-gradient(to bottom,rgba(0,0,0,.035),rgba(0,0,0,0));"></div>
<div class="r" style="left:925px;top:295px;width:244px;height:85px;background:#1b1b1b;border-radius:5px;"></div>
<svg style="left:1040px;top:379px" width="14" height="7"><path d="M0 0h14L7 6z" fill="#1b1b1b"/></svg>
<div class="t " style="left:936.5px;top:309.70px;font-size:10.75px;color:#f0f0f0;-webkit-text-stroke:0;">We were over budget due to a Change Order.</div>
<div class="t " style="left:936.5px;top:324.90px;font-size:10.75px;color:#f0f0f0;-webkit-text-stroke:0;">A Budget Change adjustment was made.</div>
<div class="t " style="left:936.5px;top:340.10px;font-size:10.75px;color:#f0f0f0;-webkit-text-stroke:0;">Check the Project Status Snapshots for the</div>
<div class="t " style="left:936.5px;top:355.30px;font-size:10.75px;color:#f0f0f0;-webkit-text-stroke:0;">Over/Under Variance from month to month.</div>
<div class="t " style="right:517.0px;top:292.37px;font-size:11.50px;color:#1a1a1a;transform:scaleX(0.9280);transform-origin:right top;">$2,390,000.00</div>
</body></html>
